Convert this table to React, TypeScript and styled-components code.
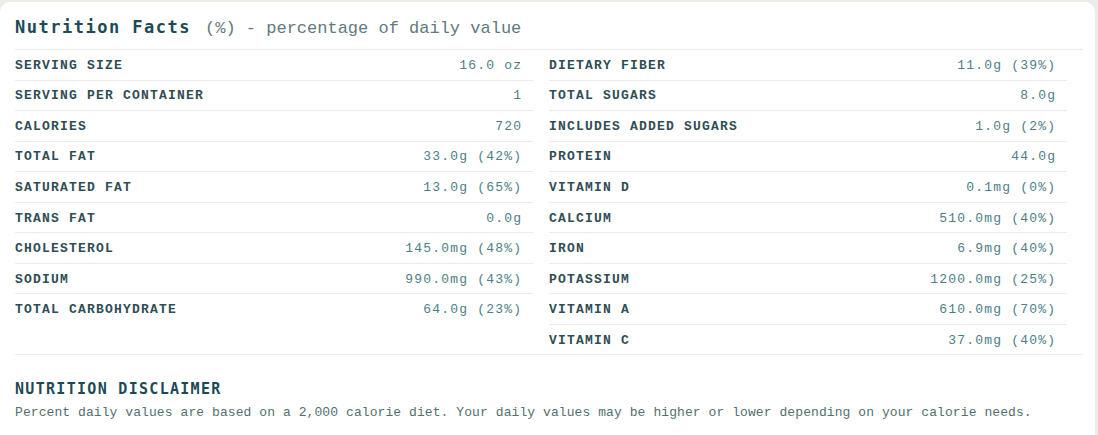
import React from "react";
import styled, { createGlobalStyle } from "styled-components";

const Global = createGlobalStyle`
  html, body { margin: 0; padding: 0; }
  body {
    background: #ecede8;
    font-family: "Liberation Mono", monospace;
  }
`;

const Card = styled.section`
  background: #ffffff;
  margin: 2px 3px 0 0;
  border-radius: 10px 10px 0 0;
  padding: 15px 12px 20px 15px;
  min-height: 420px;
  box-sizing: border-box;
`;

const Header = styled.h1`
  margin: 0;
  padding: 0 0 11px 0;
  display: flex;
  align-items: baseline;
  gap: 14px;
  font-weight: normal;
`;

const Title = styled.span`
  font-family: "DejaVu Sans Mono", monospace;
  font-weight: bold;
  font-size: 17px;
  letter-spacing: 1.5px;
  color: #1d4a55;
`;

const Subtitle = styled.span`
  font-family: "Liberation Mono", monospace;
  font-size: 17px;
  color: #62797d;
`;

const Grid = styled.div`
  display: grid;
  grid-template-columns: 1fr 1fr;
  border-top: 1px solid #e6ebeb;
  border-bottom: 1px solid #e6ebeb;
`;

const Column = styled.div`
  padding-right: 16px;
  display: flex;
  flex-direction: column;
`;

const Row = styled.div`
  display: flex;
  justify-content: space-between;
  align-items: center;
  height: 29.55px;
  padding-right: 12px;
  border-bottom: 1px solid #e6ebeb;
  &:last-child { border-bottom: none; }
`;

const Label = styled.span`
  font-family: "Courier New", "Nimbus Mono PS", "FreeMono", "Liberation Mono", monospace;
  font-weight: bold;
  font-size: 13px;
  letter-spacing: 1.2px;
  color: #2f4d55;
  padding-top: 1px;
`;

const Value = styled.span`
  font-family: "Courier New", "Nimbus Mono PS", "FreeMono", "Liberation Mono", monospace;
  font-size: 13px;
  letter-spacing: 1.2px;
  color: #4d7e87;
  margin-right: -1.2px;
  padding-top: 1px;
`;

const Disclaimer = styled.div`
  margin-top: 25px;
`;

const DisclaimerTitle = styled.h2`
  margin: 0 0 7px 0;
  font-family: "DejaVu Sans Mono", monospace;
  font-weight: bold;
  font-size: 15px;
  letter-spacing: 1.3px;
  color: #1d4a55;
`;

const DisclaimerText = styled.p`
  margin: 0;
  font-family: "Courier New", "Nimbus Mono PS", "FreeMono", "Liberation Mono", monospace;
  font-size: 13px;
  letter-spacing: 0.08px;
  color: #52706f;
`;

const left: [string, string][] = [
  ["SERVING SIZE", "16.0 oz"],
  ["SERVING PER CONTAINER", "1"],
  ["CALORIES", "720"],
  ["TOTAL FAT", "33.0g (42%)"],
  ["SATURATED FAT", "13.0g (65%)"],
  ["TRANS FAT", "0.0g"],
  ["CHOLESTEROL", "145.0mg (48%)"],
  ["SODIUM", "990.0mg (43%)"],
  ["TOTAL CARBOHYDRATE", "64.0g (23%)"],
];

const right: [string, string][] = [
  ["DIETARY FIBER", "11.0g (39%)"],
  ["TOTAL SUGARS", "8.0g"],
  ["INCLUDES ADDED SUGARS", "1.0g (2%)"],
  ["PROTEIN", "44.0g"],
  ["VITAMIN D", "0.1mg (0%)"],
  ["CALCIUM", "510.0mg (40%)"],
  ["IRON", "6.9mg (40%)"],
  ["POTASSIUM", "1200.0mg (25%)"],
  ["VITAMIN A", "610.0mg (70%)"],
  ["VITAMIN C", "37.0mg (40%)"],
];

const List = ({ items }: { items: [string, string][] }) => (
  <Column>
    {items.map(([l, v]) => (
      <Row key={l}>
        <Label>{l}</Label>
        <Value>{v}</Value>
      </Row>
    ))}
  </Column>
);

export default function App() {
  return (
    <>
      <Global />
      <Card>
        <Header>
          <Title>Nutrition Facts</Title>
          <Subtitle>(%) - percentage of daily value</Subtitle>
        </Header>
        <Grid>
          <List items={left} />
          <List items={right} />
        </Grid>
        <Disclaimer>
          <DisclaimerTitle>NUTRITION DISCLAIMER</DisclaimerTitle>
          <DisclaimerText>
            Percent daily values are based on a 2,000 calorie diet. Your daily values may be higher or lower depending on your calorie needs.
          </DisclaimerText>
        </Disclaimer>
      </Card>
    </>
  );
}
